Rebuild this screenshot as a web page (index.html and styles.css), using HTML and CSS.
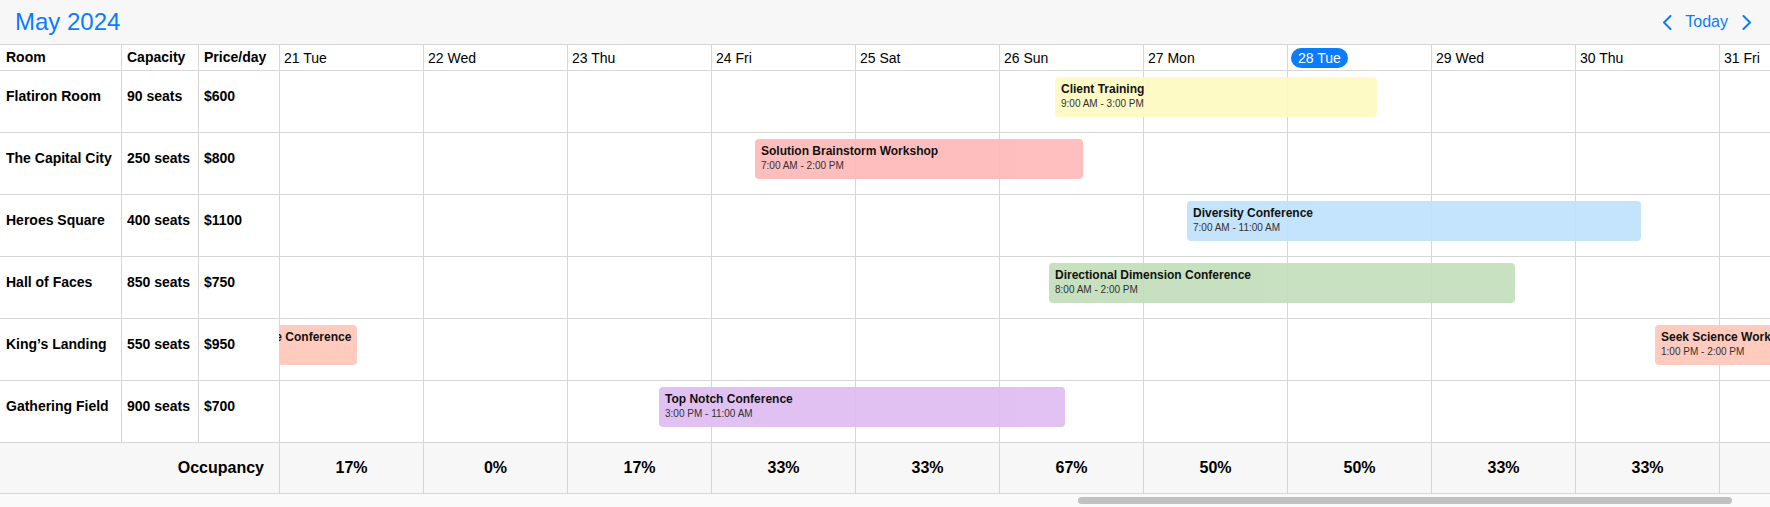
FILE: index.html
```html
<!DOCTYPE html>
<html lang="en">
<head>
    <meta charset="UTF-8">
    <meta name="viewport" content="width=device-width, initial-scale=1.0">
    <title>Meeting room booking</title>
    <link rel="stylesheet" href="styles.css">
</head>
<body>

    <div class="toolbar">
        <h1 class="month">May 2024</h1>
        <div class="nav">
            <button class="nav-btn prev" type="button" aria-label="Previous">
                <svg width="10" height="15" viewBox="0 0 10 15"><polyline points="8.5,1 2,7.5 8.5,14" /></svg>
            </button>
            <button class="nav-btn today" type="button">Today</button>
            <button class="nav-btn next" type="button" aria-label="Next">
                <svg width="10" height="15" viewBox="0 0 10 15"><polyline points="1.5,1 8,7.5 1.5,14" /></svg>
            </button>
        </div>
    </div>

    <div class="scheduler">
        <!-- Kepala tabel -->
        <div class="row head">
            <div class="side">
                <div class="cell room">Room</div>
                <div class="cell cap">Capacity</div>
                <div class="cell price">Price/day</div>
            </div>
            <div class="lane">
                <div class="track">
                    <div class="day"></div>
                    <div class="day">21 Tue</div>
                    <div class="day">22 Wed</div>
                    <div class="day">23 Thu</div>
                    <div class="day">24 Fri</div>
                    <div class="day">25 Sat</div>
                    <div class="day">26 Sun</div>
                    <div class="day">27 Mon</div>
                    <div class="day"><span class="today-pill">28 Tue</span></div>
                    <div class="day">29 Wed</div>
                    <div class="day">30 Thu</div>
                    <div class="day">31 Fri</div>
                    <div class="day"></div>
                </div>
            </div>
        </div>

        <div class="row">
            <div class="side">
                <div class="cell room">Flatiron Room</div>
                <div class="cell cap">90 seats</div>
                <div class="cell price">$600</div>
            </div>
            <div class="lane">
                <div class="track">
                    <div class="day"></div><div class="day"></div><div class="day"></div><div class="day"></div><div class="day"></div><div class="day"></div><div class="day"></div><div class="day"></div><div class="day"></div><div class="day"></div><div class="day"></div><div class="day"></div><div class="day"></div>
                    <div class="event yellow" style="left: 920px; width: 322px;">
                        <div class="title">Client Training</div>
                        <div class="time">9:00 AM - 3:00 PM</div>
                    </div>
                </div>
            </div>
        </div>

        <div class="row">
            <div class="side">
                <div class="cell room">The Capital City</div>
                <div class="cell cap">250 seats</div>
                <div class="cell price">$800</div>
            </div>
            <div class="lane">
                <div class="track">
                    <div class="day"></div><div class="day"></div><div class="day"></div><div class="day"></div><div class="day"></div><div class="day"></div><div class="day"></div><div class="day"></div><div class="day"></div><div class="day"></div><div class="day"></div><div class="day"></div><div class="day"></div>
                    <div class="event pink" style="left: 620px; width: 328px;">
                        <div class="title">Solution Brainstorm Workshop</div>
                        <div class="time">7:00 AM - 2:00 PM</div>
                    </div>
                </div>
            </div>
        </div>

        <div class="row">
            <div class="side">
                <div class="cell room">Heroes Square</div>
                <div class="cell cap">400 seats</div>
                <div class="cell price">$1100</div>
            </div>
            <div class="lane">
                <div class="track">
                    <div class="day"></div><div class="day"></div><div class="day"></div><div class="day"></div><div class="day"></div><div class="day"></div><div class="day"></div><div class="day"></div><div class="day"></div><div class="day"></div><div class="day"></div><div class="day"></div><div class="day"></div>
                    <div class="event blue" style="left: 1052px; width: 454px;">
                        <div class="title">Diversity Conference</div>
                        <div class="time">7:00 AM - 11:00 AM</div>
                    </div>
                </div>
            </div>
        </div>

        <div class="row">
            <div class="side">
                <div class="cell room">Hall of Faces</div>
                <div class="cell cap">850 seats</div>
                <div class="cell price">$750</div>
            </div>
            <div class="lane">
                <div class="track">
                    <div class="day"></div><div class="day"></div><div class="day"></div><div class="day"></div><div class="day"></div><div class="day"></div><div class="day"></div><div class="day"></div><div class="day"></div><div class="day"></div><div class="day"></div><div class="day"></div><div class="day"></div>
                    <div class="event green" style="left: 914px; width: 466px;">
                        <div class="title">Directional Dimension Conference</div>
                        <div class="time">8:00 AM - 2:00 PM</div>
                    </div>
                </div>
            </div>
        </div>

        <div class="row">
            <div class="side">
                <div class="cell room">King’s Landing</div>
                <div class="cell cap">550 seats</div>
                <div class="cell price">$950</div>
            </div>
            <div class="lane">
                <div class="track">
                    <div class="day"></div><div class="day"></div><div class="day"></div><div class="day"></div><div class="day"></div><div class="day"></div><div class="day"></div><div class="day"></div><div class="day"></div><div class="day"></div><div class="day"></div><div class="day"></div><div class="day"></div>
                    <div class="event salmon" style="left: 19px; width: 203px;">
                        <div class="title">Applied Data Science Conference</div>
                        <div class="time">9:00 AM - 1:00 PM</div>
                    </div>
                    <div class="event salmon" style="left: 1520px; width: 320px;">
                        <div class="title">Seek Science Workshop</div>
                        <div class="time">1:00 PM - 2:00 PM</div>
                    </div>
                </div>
            </div>
        </div>

        <div class="row">
            <div class="side">
                <div class="cell room">Gathering Field</div>
                <div class="cell cap">900 seats</div>
                <div class="cell price">$700</div>
            </div>
            <div class="lane">
                <div class="track">
                    <div class="day"></div><div class="day"></div><div class="day"></div><div class="day"></div><div class="day"></div><div class="day"></div><div class="day"></div><div class="day"></div><div class="day"></div><div class="day"></div><div class="day"></div><div class="day"></div><div class="day"></div>
                    <div class="event purple" style="left: 524px; width: 406px;">
                        <div class="title">Top Notch Conference</div>
                        <div class="time">3:00 PM - 11:00 AM</div>
                    </div>
                </div>
            </div>
        </div>

        <!-- Baris okupansi -->
        <div class="row foot">
            <div class="side occ">Occupancy</div>
            <div class="lane">
                <div class="track">
                    <div class="day"></div>
                    <div class="day">17%</div>
                    <div class="day">0%</div>
                    <div class="day">17%</div>
                    <div class="day">33%</div>
                    <div class="day">33%</div>
                    <div class="day">67%</div>
                    <div class="day">50%</div>
                    <div class="day">50%</div>
                    <div class="day">33%</div>
                    <div class="day">33%</div>
                    <div class="day"></div>
                    <div class="day"></div>
                </div>
            </div>
        </div>

        <div class="scrollbar">
            <div class="thumb" style="margin-left: 1078px; width: 654px;"></div>
        </div>
    </div>

</body>
</html>
```

FILE: styles.css
```css
/* Pengaturan dasar halaman */
* {
    box-sizing: border-box;
}

body {
    margin: 0;
    font-family: "Liberation Sans", Arial, Helvetica, sans-serif;
    color: #000;
    background: #fff;
    overflow: hidden;
}

/* Bar atas: bulan dan navigasi */
.toolbar {
    display: flex;
    align-items: center;
    justify-content: space-between;
    height: 45px;
    padding: 0 18px 0 15px;
    background: #f7f7f7;
    border-bottom: 1px solid #d6d6d6;
}

.month {
    margin: 0;
    font-size: 24px;
    font-weight: normal;
    color: #0b7bff;
}

.nav {
    display: flex;
    align-items: center;
}

.nav-btn {
    display: flex;
    align-items: center;
    background: none;
    border: none;
    padding: 0;
    color: #0b7bff;
    font-family: inherit;
    font-size: 16px;
    cursor: pointer;
}

.nav-btn svg polyline {
    fill: none;
    stroke: #0b7bff;
    stroke-width: 2;
    stroke-linecap: round;
    stroke-linejoin: round;
}

.prev {
    margin-right: 13px;
}

.today {
    margin-right: 14px;
}

/* Grid jadwal */
.row {
    display: flex;
    height: 62px;
    border-bottom: 1px solid #d6d6d6;
}

.side {
    display: flex;
    flex: none;
    width: 279px;
}

.cell {
    padding: 17px 0 0 5px;
    font-size: 14px;
    font-weight: bold;
    line-height: 17px;
    white-space: nowrap;
}

.cell.room {
    width: 122px;
    padding-left: 6px;
    border-right: 1px solid #d6d6d6;
}

.cell.cap {
    width: 77px;
    border-right: 1px solid #d6d6d6;
}

.cell.price {
    width: 80px;
}

.lane {
    flex: 1;
    min-width: 0;
    overflow: hidden;
}

.track {
    position: relative;
    display: flex;
    height: 100%;
    margin-left: -144px; /* posisi scroll: 20 Mon tersembunyi */
}

.day {
    flex: none;
    width: 144px;
    border-left: 1px solid #d6d6d6;
}

/* Kepala tabel */
.row.head {
    height: 26px;
}

.row.head .cell {
    padding-top: 0;
    line-height: 25px;
}

.row.head .day {
    display: flex;
    align-items: center;
    padding-left: 4px;
    font-size: 14px;
}

.today-pill {
    margin-left: -1px;
    padding: 0 7px;
    line-height: 20px;
    border-radius: 10px;
    background: #0b7bff;
    color: #fff;
}

/* Kotak acara */
.event {
    position: absolute;
    top: 6px;
    height: 40px;
    padding: 5px 6px;
    border-radius: 4px;
    white-space: nowrap;
    overflow: hidden;
    opacity: 0.93;
}

.event .title {
    font-size: 12px;
    font-weight: bold;
    line-height: 15px;
}

.event .time {
    font-size: 10px;
    line-height: 13px;
    color: #222;
}

.yellow { background: #fefac2; }
.pink   { background: #ffbaba; }
.blue   { background: #c0e2fd; }
.green  { background: #c3dfbc; }
.salmon { background: #ffc8ba; }
.purple { background: #dfbdf2; }

/* Baris okupansi */
.row.foot {
    height: 51px;
    background: #f7f7f7;
}

.occ {
    justify-content: flex-end;
    align-items: center;
    padding-right: 15px;
    font-size: 16px;
    font-weight: bold;
}

.row.foot .day {
    text-align: center;
    font-size: 16px;
    font-weight: bold;
    line-height: 50px;
}

/* Scrollbar horizontal */
.scrollbar {
    height: 13px;
    padding-top: 3px;
    background: #fafafa;
}

.thumb {
    height: 7px;
    border-radius: 4px;
    background: #c1c1c1;
}
```
